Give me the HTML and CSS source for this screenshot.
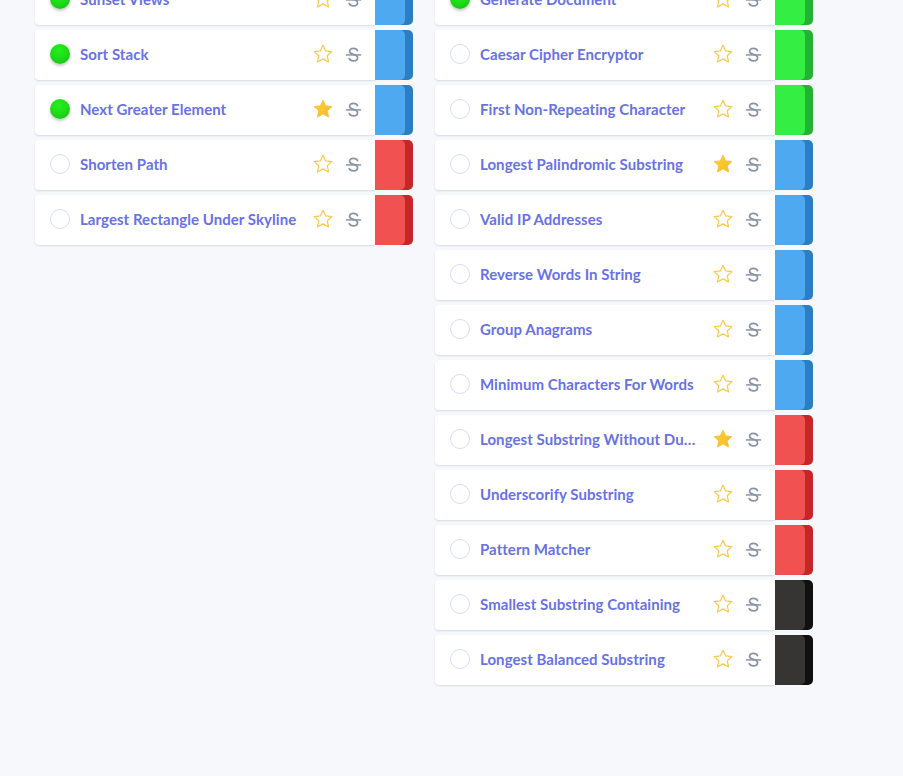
FILE: index.html
```html
<!DOCTYPE html>
<html lang="en">
<head>
<meta charset="utf-8">
<title>Questions</title>
<link rel="stylesheet" href="styles.css">
</head>
<body>
<svg width="0" height="0" class="defs">
  <defs>
    <linearGradient id="starfill" x1="0" y1="0" x2="1" y2="1">
      <stop offset="0" stop-color="#fdd23e"/>
      <stop offset="1" stop-color="#f7b924"/>
    </linearGradient>
    <symbol id="star-o" viewBox="0 0 24 24">
      <path d="M12 2.4l2.9 6.2 6.8.75-5.05 4.6 1.4 6.75L12 17.3l-6.05 3.4 1.4-6.75L2.3 9.35l6.8-.75z" fill="none" stroke="#fcc945" stroke-width="1.3" stroke-linejoin="round"/>
    </symbol>
    <symbol id="star-f" viewBox="0 0 24 24">
      <path d="M12 2.4l2.9 6.2 6.8.75-5.05 4.6 1.4 6.75L12 17.3l-6.05 3.4 1.4-6.75L2.3 9.35l6.8-.75z" fill="url(#starfill)" stroke="#f8bf2c" stroke-width="1" stroke-linejoin="round"/>
    </symbol>
    <symbol id="strike" viewBox="0 0 16 16">
      <path d="M11.8 4.3C11.2 2.9 9.8 2.2 8 2.2 5.7 2.2 4.3 3.5 4.3 5c0 1.6 1.3 2.4 3.7 2.9 2.7.6 3.8 1.5 3.8 3.1 0 1.8-1.6 3-3.9 3-1.9 0-3.3-.8-3.9-2.1" fill="none" stroke="#8893a6" stroke-width="1.6" stroke-linecap="round"/>
      <path d="M0.8 8.4h14.4" stroke="#8893a6" stroke-width="1.4"/>
    </symbol>
  </defs>
</svg>
<main class="board">
  <section class="column">
    <div class="row"><div class="card"><span class="dot done"></span><span class="title">Sunset Views</span><svg class="star"><use href="#star-o"/></svg><svg class="strike"><use href="#strike"/></svg></div><div class="tag blue"><div class="face"></div></div></div>
    <div class="row"><div class="card"><span class="dot done"></span><span class="title">Sort Stack</span><svg class="star"><use href="#star-o"/></svg><svg class="strike"><use href="#strike"/></svg></div><div class="tag blue"><div class="face"></div></div></div>
    <div class="row"><div class="card"><span class="dot done"></span><span class="title">Next Greater Element</span><svg class="star"><use href="#star-f"/></svg><svg class="strike"><use href="#strike"/></svg></div><div class="tag blue"><div class="face"></div></div></div>
    <div class="row"><div class="card"><span class="dot"></span><span class="title">Shorten Path</span><svg class="star"><use href="#star-o"/></svg><svg class="strike"><use href="#strike"/></svg></div><div class="tag red"><div class="face"></div></div></div>
    <div class="row"><div class="card"><span class="dot"></span><span class="title">Largest Rectangle Under Skyline</span><svg class="star"><use href="#star-o"/></svg><svg class="strike"><use href="#strike"/></svg></div><div class="tag red"><div class="face"></div></div></div>
  </section>
  <section class="column">
    <div class="row"><div class="card"><span class="dot done"></span><span class="title">Generate Document</span><svg class="star"><use href="#star-o"/></svg><svg class="strike"><use href="#strike"/></svg></div><div class="tag green"><div class="face"></div></div></div>
    <div class="row"><div class="card"><span class="dot"></span><span class="title">Caesar Cipher Encryptor</span><svg class="star"><use href="#star-o"/></svg><svg class="strike"><use href="#strike"/></svg></div><div class="tag green"><div class="face"></div></div></div>
    <div class="row"><div class="card"><span class="dot"></span><span class="title">First Non-Repeating Character</span><svg class="star"><use href="#star-o"/></svg><svg class="strike"><use href="#strike"/></svg></div><div class="tag green"><div class="face"></div></div></div>
    <div class="row"><div class="card"><span class="dot"></span><span class="title">Longest Palindromic Substring</span><svg class="star"><use href="#star-f"/></svg><svg class="strike"><use href="#strike"/></svg></div><div class="tag blue"><div class="face"></div></div></div>
    <div class="row"><div class="card"><span class="dot"></span><span class="title">Valid IP Addresses</span><svg class="star"><use href="#star-o"/></svg><svg class="strike"><use href="#strike"/></svg></div><div class="tag blue"><div class="face"></div></div></div>
    <div class="row"><div class="card"><span class="dot"></span><span class="title">Reverse Words In String</span><svg class="star"><use href="#star-o"/></svg><svg class="strike"><use href="#strike"/></svg></div><div class="tag blue"><div class="face"></div></div></div>
    <div class="row"><div class="card"><span class="dot"></span><span class="title">Group Anagrams</span><svg class="star"><use href="#star-o"/></svg><svg class="strike"><use href="#strike"/></svg></div><div class="tag blue"><div class="face"></div></div></div>
    <div class="row"><div class="card"><span class="dot"></span><span class="title">Minimum Characters For Words</span><svg class="star"><use href="#star-o"/></svg><svg class="strike"><use href="#strike"/></svg></div><div class="tag blue"><div class="face"></div></div></div>
    <div class="row"><div class="card"><span class="dot"></span><span class="title">Longest Substring Without Duplication</span><svg class="star"><use href="#star-f"/></svg><svg class="strike"><use href="#strike"/></svg></div><div class="tag red"><div class="face"></div></div></div>
    <div class="row"><div class="card"><span class="dot"></span><span class="title">Underscorify Substring</span><svg class="star"><use href="#star-o"/></svg><svg class="strike"><use href="#strike"/></svg></div><div class="tag red"><div class="face"></div></div></div>
    <div class="row"><div class="card"><span class="dot"></span><span class="title">Pattern Matcher</span><svg class="star"><use href="#star-o"/></svg><svg class="strike"><use href="#strike"/></svg></div><div class="tag red"><div class="face"></div></div></div>
    <div class="row"><div class="card"><span class="dot"></span><span class="title">Smallest Substring Containing</span><svg class="star"><use href="#star-o"/></svg><svg class="strike"><use href="#strike"/></svg></div><div class="tag black"><div class="face"></div></div></div>
    <div class="row"><div class="card"><span class="dot"></span><span class="title">Longest Balanced Substring</span><svg class="star"><use href="#star-o"/></svg><svg class="strike"><use href="#strike"/></svg></div><div class="tag black"><div class="face"></div></div></div>
  </section>
</main>
</body>
</html>
```
FILE: styles.css
```css
html, body {
  margin: 0;
  padding: 0;
  background: #f6f8fb;
  height: 100%;
  overflow: hidden;
}
body {
  font-family: Lato, "Open Sans", "Liberation Sans", sans-serif;
}
.defs {
  position: absolute;
  width: 0;
  height: 0;
}
.board {
  display: flex;
  align-items: flex-start;
  gap: 22px;
  padding-left: 35px;
  margin-top: -25px;
}
.column {
  display: flex;
  flex-direction: column;
  gap: 5px;
  width: 378px;
}
.row {
  display: flex;
  height: 50px;
}
.card {
  flex: 1;
  min-width: 0;
  display: flex;
  align-items: center;
  box-sizing: border-box;
  background: #fff;
  border-radius: 4px 0 0 4px;
  box-shadow: 0 1px 2px rgba(30, 40, 60, 0.14);
  padding: 0 13px 2px 15px;
}
.dot {
  flex: none;
  width: 20px;
  height: 20px;
  box-sizing: border-box;
  border-radius: 50%;
  border: 1.5px solid #d8dbf9;
  margin-right: 10px;
}
.dot.done {
  border: none;
  background: radial-gradient(circle at 45% 30%, #22f01c 0%, #1ede16 45%, #1ab51a 100%);
  box-shadow: 0 2px 3px rgba(0, 0, 0, 0.22);
}
.title {
  flex: 1;
  min-width: 0;
  font-size: 15px;
  font-weight: 700;
  letter-spacing: 0.05px;
  color: #6772e5;
  white-space: nowrap;
  overflow: hidden;
  text-overflow: ellipsis;
}
.star {
  flex: none;
  width: 22px;
  height: 22px;
  margin-left: 15px;
}
.strike {
  flex: none;
  width: 17px;
  height: 17px;
  margin-left: 11px;
}
.tag {
  flex: none;
  width: 38px;
  height: 50px;
  border-radius: 0 5px 5px 0;
}
.tag .face {
  width: 30px;
  height: 100%;
  border-radius: 0 5px 5px 0;
}
.tag.blue { background: #2a7fc1; }
.tag.blue .face { background: #4fa9f0; }
.tag.green { background: #22b332; }
.tag.green .face { background: #34ee44; }
.tag.red { background: #c62626; }
.tag.red .face { background: #f05252; }
.tag.black { background: #101010; }
.tag.black .face { background: #363534; }
```
